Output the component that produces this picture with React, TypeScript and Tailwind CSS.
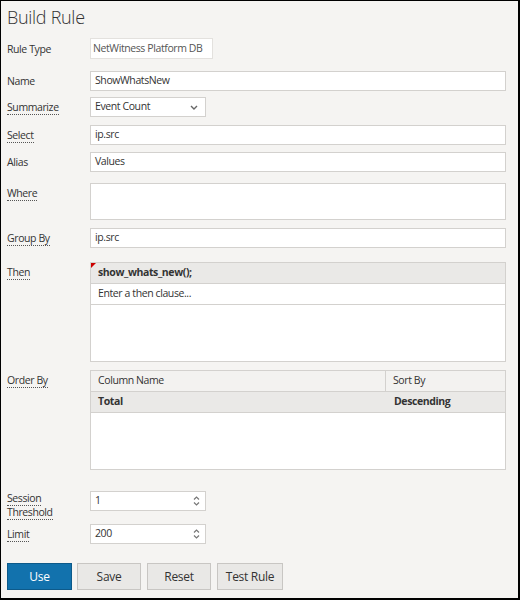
import React from 'react'

const font = { fontFamily: '"Open Sans", "Liberation Sans", sans-serif' }

function Label({ children, dotted = false, className = '' }: { children: React.ReactNode; dotted?: boolean; className?: string }) {
  return (
    <div className={`w-[83px] shrink-0 text-[10.5px] leading-[14px] tracking-[-0.4px] text-[#333] ${className}`}>
      <span className={dotted ? 'border-b border-dotted border-[#555]' : ''}>{children}</span>
    </div>
  )
}

function TextBox({ value, className = '' }: { value?: string; className?: string }) {
  return (
    <div className={`flex items-center border border-[#d3d1ce] bg-white px-[4px] text-[10.5px] tracking-[-0.4px] text-[#333] ${className}`}>
      {value}
    </div>
  )
}

function Spinner() {
  return (
    <svg width="9" height="12" viewBox="0 0 9 12" className="text-[#777]">
      <path d="M2 4.5 L4.5 2 L7 4.5" fill="none" stroke="currentColor" strokeWidth="1.2" />
      <path d="M2 7.5 L4.5 10 L7 7.5" fill="none" stroke="currentColor" strokeWidth="1.2" />
    </svg>
  )
}

function NumberBox({ value }: { value: string }) {
  return (
    <div className="flex h-[20px] w-[116px] items-center justify-between border border-[#d3d1ce] bg-white pl-[4px] pr-[4px] text-[10.5px] tracking-[-0.4px] text-[#333]">
      <span>{value}</span>
      <Spinner />
    </div>
  )
}

export default function App() {
  return (
    <div style={font} className="h-[600px] w-[520px] border border-r-2 border-b-2 border-black bg-[#f5f4f2] pl-[6px] pr-[12px]">
      <h1 className="pt-[3px] text-[18px] font-light leading-[26px] tracking-[-0.3px] text-[#333]">Build Rule</h1>

      <div className="mt-[8px] flex items-center">
        <Label>Rule Type</Label>
        <div className="flex h-[21px] w-[123px] items-center whitespace-nowrap border border-[#e3e1de] bg-white px-[2px] text-[10.5px] tracking-[-0.4px] text-[#555]">
          NetWitness Platform DB
        </div>
      </div>

      <div className="mt-[12px] flex items-center">
        <Label>Name</Label>
        <TextBox value="ShowWhatsNew" className="h-[20px] flex-1" />
      </div>

      <div className="mt-[6px] flex items-center">
        <Label dotted>Summarize</Label>
        <div className="flex h-[20px] w-[116px] items-center justify-between border border-[#d3d1ce] bg-white px-[4px] text-[10.5px] tracking-[-0.4px] text-[#333]">
          <span>Event Count</span>
          <svg width="8" height="5" viewBox="0 0 8 5" className="mr-[3px] text-[#666]">
            <path d="M1 1 L4 4 L7 1" fill="none" stroke="currentColor" strokeWidth="1.4" />
          </svg>
        </div>
      </div>

      <div className="mt-[8px] flex items-center">
        <Label dotted>Select</Label>
        <TextBox value="ip.src" className="h-[20px] flex-1" />
      </div>

      <div className="mt-[7px] flex items-center">
        <Label>Alias</Label>
        <TextBox value="Values" className="h-[20px] flex-1" />
      </div>

      <div className="mt-[11px] flex items-start">
        <Label dotted className="pt-[3px]">Where</Label>
        <TextBox className="h-[37px] flex-1" />
      </div>

      <div className="mt-[8px] flex items-center">
        <Label dotted>Group By</Label>
        <TextBox value="ip.src" className="h-[20px] flex-1" />
      </div>

      <div className="mt-[14px] flex items-start">
        <Label dotted className="pt-[3px]">Then</Label>
        <div className="relative flex h-[100px] flex-1 flex-col border border-[#d3d1ce] bg-white">
          <div className="absolute left-0 top-0 h-0 w-0 border-r-[5px] border-t-[5px] border-r-transparent border-t-[#cc0000]" />
          <div className="flex h-[21px] items-center border-b border-[#d3d1ce] bg-[#eae9e7] px-[7px] text-[10.5px] font-bold tracking-[-0.4px] text-[#333]">
            show_whats_new();
          </div>
          <div className="flex h-[21px] items-center border-b border-[#d3d1ce] px-[7px] text-[10.5px] tracking-[-0.4px] text-[#333]">
            Enter a then clause...
          </div>
        </div>
      </div>

      <div className="mt-[8px] flex items-start">
        <Label dotted className="pt-[3px]">Order By</Label>
        <div className="flex h-[100px] flex-1 flex-col border border-[#d3d1ce] bg-white">
          <div className="flex h-[21px] border-b border-[#d3d1ce] bg-[#f3f2f0] text-[10.5px] tracking-[-0.4px] text-[#333]">
            <div className="flex w-[295px] items-center border-r border-[#d3d1ce] px-[7px]">Column Name</div>
            <div className="flex flex-1 items-center px-[7px]">Sort By</div>
          </div>
          <div className="flex h-[21px] border-b border-[#d3d1ce] bg-[#eae9e7] text-[10.5px] font-bold tracking-[-0.4px] text-[#333]">
            <div className="flex w-[296px] items-center px-[7px]">Total</div>
            <div className="flex flex-1 items-center px-[7px]">Descending</div>
          </div>
        </div>
      </div>

      <div className="mt-[21px] flex items-start">
        <Label dotted>Session</Label>
        <NumberBox value="1" />
      </div>
      <div className="-mt-[6px] w-[83px] text-[10.5px] leading-[14px] tracking-[-0.4px] text-[#333]">
        <span className="border-b border-dotted border-[#555]">Threshold</span>
      </div>

      <div className="mt-[5px] flex items-center">
        <Label dotted>Limit</Label>
        <NumberBox value="200" />
      </div>

      <div className="mt-[19px] flex gap-[5px] text-[12px] tracking-[-0.3px]">
        <button className="h-[27px] w-[65px] border border-[#0d5a8a] bg-[#1272ad] text-white">Use</button>
        <button className="h-[27px] w-[64px] border border-[#c8c6c3] bg-[#e9e8e6] text-[#333]">Save</button>
        <button className="ml-[1px] h-[27px] w-[64px] border border-[#c8c6c3] bg-[#e9e8e6] text-[#333]">Reset</button>
        <button className="ml-[1px] h-[27px] w-[66px] border border-[#c8c6c3] bg-[#e9e8e6] text-[#333]">Test Rule</button>
      </div>
    </div>
  )
}
